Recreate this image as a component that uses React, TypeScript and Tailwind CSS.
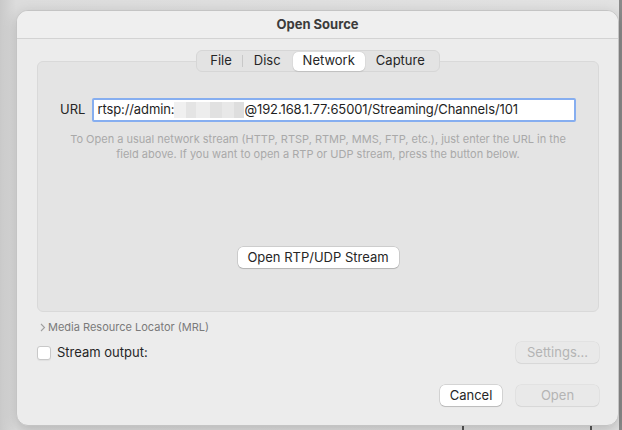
import React from 'react';

const font = { fontFamily: 'Inter, "Liberation Sans", sans-serif' };

const Tabs: React.FC = () => {
  const tabs = ['File', 'Disc', 'Network', 'Capture'];
  return (
    <div className="relative z-10 self-center flex items-center h-[22px] rounded-[6px] bg-[#e3e3e3] border border-[#d6d6d6] px-[1px]">
      {tabs.map((t, i) => (
        <React.Fragment key={t}>
          {i === 1 && <div className="w-px h-[12px] bg-[#c8c8c8]" />}
          <div
            className={`h-[19px] flex items-center text-[13px] text-[#262626] ${
              t === 'Network'
                ? 'bg-white rounded-[5px] shadow-[0_0_1px_rgba(0,0,0,0.25),0_1px_1px_rgba(0,0,0,0.08)] px-[10px]'
                : t === 'File'
                ? 'pl-[12px] pr-[10px]'
                : t === 'Disc'
                ? 'pl-[11px] pr-[12px]'
                : 'pl-[11px] pr-[13px]'
            }`}
          >
            {t}
          </div>
        </React.Fragment>
      ))}
    </div>
  );
};

const Blur: React.FC = () => (
  <span className="inline-flex h-[16px] w-[70px] align-middle">
    <span className="w-[12px] bg-[#f0f0f0]" />
    <span className="w-[10px] bg-[#e4e4e4]" />
    <span className="w-[14px] bg-[#ededed]" />
    <span className="w-[12px] bg-[#e1e1e1]" />
    <span className="w-[12px] bg-[#e8e8e8]" />
    <span className="w-[10px] bg-[#dedede]" />
  </span>
);

const App: React.FC = () => {
  return (
    <div
      className="w-[622px] h-[430px] overflow-hidden bg-[linear-gradient(90deg,#c9c9c9_0px,#dcdcdc_16px,#e2e2e2_100%)] relative"
      style={font}
    >
      {/* background window edges */}
      <div className="absolute right-0 top-0 w-[3px] h-full bg-[#8a8a8a]" />
      <div className="absolute left-[462px] bottom-0 w-[2px] h-[6px] bg-[#555]" />
      <div className="absolute left-[590px] bottom-0 w-[2px] h-[6px] bg-[#555]" />

      <div className="relative ml-[16px] mt-[10px] w-[603px] h-[416px] rounded-[12px] bg-[#ececec] border border-[#c4c4c4] shadow-[0_4px_14px_rgba(0,0,0,0.18)] flex flex-col overflow-hidden">
        {/* title bar */}
        <div className="h-[28px] shrink-0 flex items-center justify-center bg-[#efefef] border-b border-[#d3d3d3] text-[13px] font-bold text-[#3b3b3b]">
          Open Source
        </div>

        <div className="flex flex-col pl-[20px] pr-[19px]">
          <div className="mt-[11px] flex flex-col">
            <Tabs />
            <div className="-mt-[11px] h-[251px] rounded-[6px] bg-[#e4e4e4] border border-[#d9d9d9] flex flex-col items-center">
              <div className="mt-[36px] flex items-center w-full px-[22px]">
                <span className="text-[13px] text-[#262626] mr-[7px]">URL</span>
                <div className="flex-1 h-[24px] rounded-[2px] bg-white border-[2.5px] border-[#86aef0] flex items-center pl-[3px] text-[13px] tracking-[-0.1px] text-[#1f1f1f] whitespace-nowrap overflow-hidden">
                  rtsp://admin:
                  <Blur />
                  @192.168.1.77:65001/Streaming/Channels/101
                </div>
              </div>
              <div className="mt-[10px] w-full flex flex-col items-center text-[11px] leading-[15px] text-[#a9a9a9] whitespace-nowrap">
                <span className="block">To Open a usual network stream (HTTP, RTSP, RTMP, MMS, FTP, etc.), just enter the URL in the</span>
                <span className="block">field above. If you want to open a RTP or UDP stream, press the button below.</span>
              </div>
              <button className="mt-[85px] h-[21px] w-[161px] rounded-[5px] bg-white text-[13px] text-[#262626] shadow-[0_0_0_0.5px_rgba(0,0,0,0.2),0_1px_1px_rgba(0,0,0,0.12)]">
                Open RTP/UDP Stream
              </button>
            </div>
          </div>

          <div className="mt-[8px] flex items-center h-[14px] text-[11px] text-[#7a7a7a]">
            <svg width="6" height="9" viewBox="0 0 6 9" className="ml-[3px] mr-[2px]">
              <path d="M1 1 L4.5 4.5 L1 8" fill="none" stroke="#a0a0a0" strokeWidth="1.1" />
            </svg>
            Media Resource Locator (MRL)
          </div>

          <div className="mt-[8px] flex items-center justify-between">
            <div className="flex items-center">
              <div className="w-[14px] h-[14px] rounded-[3px] bg-white border border-[#c8c8c8] shadow-[0_1px_1px_rgba(0,0,0,0.05)]" />
              <span className="ml-[6px] text-[13px] text-[#262626]">Stream output:</span>
            </div>
            <button className="h-[21px] w-[83px] rounded-[5px] bg-[#e9e9e9] text-[13px] text-[#b4b4b4] shadow-[0_0_0_0.5px_rgba(0,0,0,0.08),0_1px_1px_rgba(0,0,0,0.05)]">
              Settings...
            </button>
          </div>

          <div className="mt-[22px] flex items-center justify-end gap-[14px]">
            <button className="h-[21px] w-[62px] rounded-[5px] bg-white text-[13px] text-[#262626] shadow-[0_0_0_0.5px_rgba(0,0,0,0.2),0_1px_1px_rgba(0,0,0,0.12)]">
              Cancel
            </button>
            <button className="h-[21px] w-[83px] rounded-[5px] bg-[#e9e9e9] text-[13px] text-[#b4b4b4] shadow-[0_0_0_0.5px_rgba(0,0,0,0.08),0_1px_1px_rgba(0,0,0,0.05)]">
              Open
            </button>
          </div>
        </div>
      </div>
    </div>
  );
};

export default App;
